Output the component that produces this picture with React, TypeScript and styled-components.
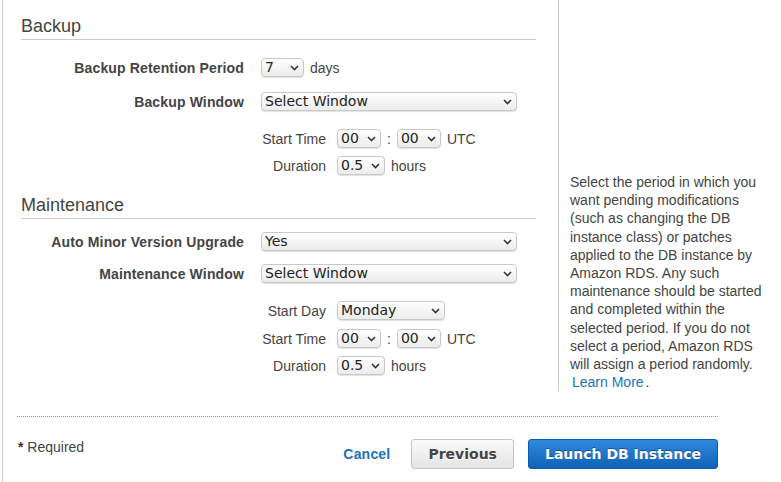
import React from "react"
import styled, { createGlobalStyle } from "styled-components"

const GlobalStyle = createGlobalStyle`
  body {
    margin: 0;
    background: #fff;
    font-family: "Liberation Sans", Arial, sans-serif;
    color: #444;
  }
`

const Page = styled.div`
  margin-left: 2px;
  border-left: 1px solid #ccc;
  width: 779px;
  min-height: 482px;
  box-sizing: border-box;
`

const Top = styled.div`
  display: flex;
`

const Main = styled.main`
  width: 556px;
  box-sizing: border-box;
  padding: 0 22px 14px 18px;
  border-right: 1px solid #ccc;
`

const Aside = styled.aside`
  flex: 1;
  padding: 173px 5px 0 11px;
  font-size: 14px;
  line-height: 18.2px;
  color: #444;
`

const Link = styled.a`
  color: #1a73c0;
  text-decoration: none;
  padding: 0 2px;
  cursor: pointer;
`

const SectionTitle = styled.h2<{ $top: number }>`
  margin: ${p => p.$top}px 0 0;
  padding-bottom: 2px;
  border-bottom: 1px solid #ccc;
  font-size: 18px;
  line-height: 22px;
  font-weight: normal;
  color: #444;
`

const FieldRow = styled.div<{ $top: number }>`
  display: grid;
  grid-template-columns: 223px 1fr;
  column-gap: 17px;
  align-items: center;
  margin-top: ${p => p.$top}px;
  min-height: 19px;
`

const FieldLabel = styled.label`
  text-align: right;
  font-size: 14px;
  font-weight: bold;
  letter-spacing: 0.14px;
  color: #444;
`

const Controls = styled.div`
  display: flex;
  align-items: center;
  gap: 6px;
  font-size: 14px;
  color: #444;
`

const SubRow = styled.div<{ $top: number }>`
  display: flex;
  align-items: center;
  margin: ${p => p.$top}px 0 0 240px;
  height: 19px;
`

const SubLabel = styled.label`
  width: 65px;
  margin-right: 11px;
  text-align: right;
  font-size: 14px;
  color: #444;
  white-space: nowrap;
`

const SelectWrap = styled.span`
  position: relative;
  display: inline-flex;
`

const NativeSelect = styled.select<{ $w: number }>`
  appearance: none;
  -webkit-appearance: none;
  width: ${p => p.$w}px;
  height: 19px;
  box-sizing: border-box;
  margin: 0;
  padding: 0 14px 0 3px;
  border: 1px solid #c8c8c8;
  border-radius: 4px;
  background: linear-gradient(#ffffff, #ececec);
  box-shadow: 0 1px 1px rgba(0, 0, 0, 0.12);
  font-family: "DejaVu Sans", sans-serif;
  font-size: 14px;
  line-height: 17px;
  color: #222;
  outline: none;
`

const Chevron = styled.svg`
  position: absolute;
  right: 5px;
  top: 7px;
  pointer-events: none;
`

const Colon = styled.span`
  font-size: 14px;
`

const Footer = styled.footer`
  margin: 25px 0 0 14px;
  width: 701px;
  padding: 22px 0 14px;
  border-top: 1px dotted #999;
  display: flex;
  align-items: flex-start;
`

const Required = styled.div`
  flex: 1;
  font-size: 14px;
  line-height: 18px;
  color: #444;
  padding-left: 1px;
  margin-top: -1px;

  b {
    color: #333;
  }
`

const Actions = styled.div`
  display: flex;
  align-items: center;
  height: 30px;
`

const CancelLink = styled.a`
  font-size: 14px;
  font-weight: bold;
  color: #1a73c0;
  margin-right: 21px;
  letter-spacing: 0.2px;
  cursor: pointer;
`

const Button = styled.button<{ $primary?: boolean }>`
  height: 30px;
  padding: 0 16px;
  margin-left: ${p => (p.$primary ? 14 : 0)}px;
  border-radius: 3px;
  font-family: "DejaVu Sans", sans-serif;
  font-size: 14px;
  font-weight: bold;
  white-space: nowrap;
  cursor: pointer;
  border: 1px solid ${p => (p.$primary ? "#0d5dac" : "#c4c4c4")};
  color: ${p => (p.$primary ? "#fff" : "#444")};
  background: ${p =>
    p.$primary
      ? "linear-gradient(#2f89dd, #0f62b6)"
      : "linear-gradient(#fafafa, #e4e4e4)"};
  text-shadow: ${p =>
    p.$primary ? "0 -1px 0 rgba(0,0,0,0.35)" : "0 1px 0 rgba(255,255,255,0.8)"};
`

function Select({ width, value, options }: { width: number; value: string; options?: string[] }) {
  const opts = options ?? [value]
  return (
    <SelectWrap>
      <NativeSelect $w={width} defaultValue={value}>
        {opts.map(o => (
          <option key={o}>{o}</option>
        ))}
      </NativeSelect>
      <Chevron width="9" height="6" viewBox="0 0 9 6">
        <path d="M1 1 L4.5 4.6 L8 1" fill="none" stroke="#333" strokeWidth="1.5" />
      </Chevron>
    </SelectWrap>
  )
}

const hours = Array.from({ length: 24 }, (_, i) => String(i).padStart(2, "0"))
const minutes = ["00", "30"]
const durations = ["0.5", "1", "1.5", "2", "2.5", "3"]

function TimeRows({ top }: { top: number }) {
  return (
    <>
      <SubRow $top={top}>
        <SubLabel>Start Time</SubLabel>
        <Controls>
          <Select width={44} value="00" options={hours} />
          <Colon>:</Colon>
          <Select width={44} value="00" options={minutes} />
          <span>UTC</span>
        </Controls>
      </SubRow>
      <SubRow $top={8}>
        <SubLabel>Duration</SubLabel>
        <Controls>
          <Select width={48} value="0.5" options={durations} />
          <span>hours</span>
        </Controls>
      </SubRow>
    </>
  )
}

export default function App() {
  return (
    <Page>
      <GlobalStyle />
      <Top>
        <Main>
          <SectionTitle $top={15}>Backup</SectionTitle>
          <FieldRow $top={18}>
            <FieldLabel>Backup Retention Period</FieldLabel>
            <Controls>
              <Select width={43} value="7" options={["0", "1", "7", "14", "35"]} />
              <span>days</span>
            </Controls>
          </FieldRow>
          <FieldRow $top={15}>
            <FieldLabel>Backup Window</FieldLabel>
            <Controls>
              <Select width={256} value="Select Window" />
            </Controls>
          </FieldRow>
          <TimeRows top={18} />

          <SectionTitle $top={19}>Maintenance</SectionTitle>
          <FieldRow $top={13}>
            <FieldLabel>Auto Minor Version Upgrade</FieldLabel>
            <Controls>
              <Select width={256} value="Yes" options={["Yes", "No"]} />
            </Controls>
          </FieldRow>
          <FieldRow $top={13}>
            <FieldLabel>Maintenance Window</FieldLabel>
            <Controls>
              <Select width={256} value="Select Window" />
            </Controls>
          </FieldRow>
          <SubRow $top={18}>
            <SubLabel>Start Day</SubLabel>
            <Controls>
              <Select
                width={108}
                value="Monday"
                options={["Monday", "Tuesday", "Wednesday", "Thursday", "Friday", "Saturday", "Sunday"]}
              />
            </Controls>
          </SubRow>
          <TimeRows top={9} />
        </Main>
        <Aside>
          Select the period in which you want pending modifications (such as
          changing the DB instance class) or patches applied to the DB instance
          by Amazon RDS. Any such maintenance should be started and completed
          within the selected period. If you do not select a period, Amazon RDS
          will assign a period randomly. <Link>Learn More</Link>.
        </Aside>
      </Top>
      <Footer>
        <Required>
          <b>*</b> Required
        </Required>
        <Actions>
          <CancelLink>Cancel</CancelLink>
          <Button>Previous</Button>
          <Button $primary>Launch DB Instance</Button>
        </Actions>
      </Footer>
    </Page>
  )
}
